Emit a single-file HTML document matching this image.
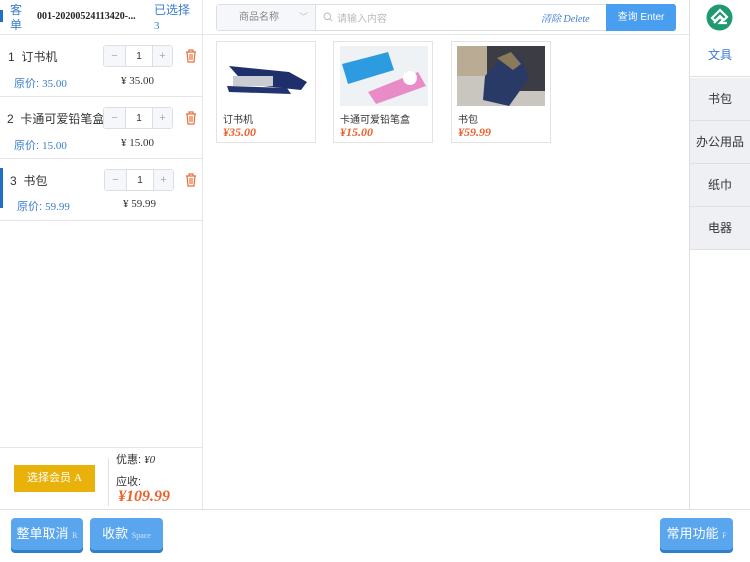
<!DOCTYPE html>
<html><head><meta charset="utf-8"><style>
*{box-sizing:border-box;margin:0;padding:0}
body{width:750px;height:562px;overflow:hidden;background:#fff;font-family:"Liberation Sans","Noto Sans CJK SC",sans-serif;position:relative;color:#333}
.a{position:absolute}
.serif{font-family:"Liberation Serif","Noto Serif CJK SC",serif}
.row{position:absolute;left:0;width:202px;border-bottom:1px solid #e6e6e6}
.stp{position:absolute;width:70px;height:22px;border:1px solid #dcdfe6;border-radius:3px;background:#fff;font-size:11px}
.stp span{position:absolute;top:0;height:20px;display:flex;align-items:center;justify-content:center;color:#aaa}
.cat{position:absolute;left:690px;width:60px;height:43px;background:#eef0f3;border-bottom:1px solid #e0e0e0;text-align:center;line-height:43px;font-size:12px;color:#333}
.card{position:absolute;top:41px;width:100px;height:102px;border:1px solid #e3e3e3;background:#fff}
.card .n{position:absolute;left:6px;top:69px;font-size:10px}
.card .p{position:absolute;left:6px;top:83px;font-size:12px;color:#f0602a;font-style:italic;font-weight:bold;font-family:"Liberation Serif",serif}
.btn{position:absolute;top:518px;height:32px;background:#5aa6ee;border-radius:4px;box-shadow:0 3px 0 #2f7fcc;color:#fff;font-size:13px;text-align:center;line-height:32px}
.btn small{font-size:8px;color:#d6e8fb;font-family:"Liberation Serif",serif}
.trash{position:absolute;width:12px;height:14px}
</style></head><body>
<div class="a" style="left:202px;top:0;width:1px;height:509px;background:#e6e6e6"></div>
<div class="row" style="top:0;height:35px"></div>
<div class="a" style="left:0;top:10px;width:3px;height:12px;background:#1f6fc5"></div>
<div class="a" style="left:10px;top:3px;font-size:12px;color:#3a7ccf;line-height:15px">客<br>单</div>
<div class="a serif" style="left:37px;top:11px;font-size:10px;font-weight:bold;color:#222">001-20200524113420-...</div>
<div class="a" style="left:154px;top:3px;font-size:12px;color:#3a7ccf;line-height:15px">已选择<br><span class="serif" style="font-size:11px">3</span></div>

<div class="row" style="top:35px;height:62px"></div>
<div class="row" style="top:97px;height:62px"></div>
<div class="row" style="top:159px;height:62px"></div>
<div class="a" style="left:0;top:168px;width:3px;height:40px;background:#1f6fc5"></div>

<div class="a" style="left:8px;top:48px;font-size:12px">1&nbsp; 订书机</div>
<div class="a" style="left:14px;top:75px;font-size:11px;color:#3a7ccf">原价: <span class="serif">35.00</span></div>
<div class="a serif" style="left:121px;top:75px;font-size:11px">¥ 35.00</div>
<div class="stp" style="left:103px;top:45px"><span style="left:0;width:22px;border-right:1px solid #dcdfe6;background:#f5f7fa">−</span><span style="left:22px;width:26px;color:#333;font-size:10px">1</span><span style="left:48px;width:20px;border-left:1px solid #dcdfe6;background:#f5f7fa">+</span></div>

<div class="a" style="left:7px;top:110px;font-size:12px">2&nbsp; 卡通可爱铅笔盒</div>
<div class="a" style="left:14px;top:137px;font-size:11px;color:#3a7ccf">原价: <span class="serif">15.00</span></div>
<div class="a serif" style="left:121px;top:137px;font-size:11px">¥ 15.00</div>
<div class="stp" style="left:103px;top:107px"><span style="left:0;width:22px;border-right:1px solid #dcdfe6;background:#f5f7fa">−</span><span style="left:22px;width:26px;color:#333;font-size:10px">1</span><span style="left:48px;width:20px;border-left:1px solid #dcdfe6;background:#f5f7fa">+</span></div>

<div class="a" style="left:10px;top:172px;font-size:12px">3&nbsp; 书包</div>
<div class="a" style="left:17px;top:198px;font-size:11px;color:#3a7ccf">原价: <span class="serif">59.99</span></div>
<div class="a serif" style="left:123px;top:198px;font-size:11px">¥ 59.99</div>
<div class="stp" style="left:104px;top:169px"><span style="left:0;width:22px;border-right:1px solid #dcdfe6;background:#f5f7fa">−</span><span style="left:22px;width:26px;color:#333;font-size:10px">1</span><span style="left:48px;width:20px;border-left:1px solid #dcdfe6;background:#f5f7fa">+</span></div>

<svg class="trash" style="left:185px;top:49px" viewBox="0 0 12 14"><path d="M1 3h10M4 3V1h4v2M2 3l1 10h6l1-10M5 5v6M7 5v6" fill="none" stroke="#e8703a" stroke-width="1.2"/></svg>
<svg class="trash" style="left:185px;top:111px" viewBox="0 0 12 14"><path d="M1 3h10M4 3V1h4v2M2 3l1 10h6l1-10M5 5v6M7 5v6" fill="none" stroke="#e8703a" stroke-width="1.2"/></svg>
<svg class="trash" style="left:185px;top:173px" viewBox="0 0 12 14"><path d="M1 3h10M4 3V1h4v2M2 3l1 10h6l1-10M5 5v6M7 5v6" fill="none" stroke="#e8703a" stroke-width="1.2"/></svg>

<div class="a" style="left:0;top:447px;width:202px;height:1px;background:#e6e6e6"></div>
<div class="a" style="left:14px;top:465px;width:81px;height:27px;background:#e8b20a;color:#fff;font-size:11px;text-align:center;line-height:27px">选择会员 <span class="serif">A</span></div>
<div class="a" style="left:108px;top:458px;width:1px;height:48px;background:#e0e0e0"></div>
<div class="a" style="left:116px;top:451px;font-size:11px">优惠: <span class="serif" style="font-style:italic">¥0</span></div>
<div class="a" style="left:116px;top:473px;font-size:11px">应收:</div>
<div class="a serif" style="left:118px;top:488px;font-size:16px;color:#f0602a;font-style:italic;font-weight:bold">¥109.99</div>

<div class="a" style="left:216px;top:4px;width:460px;height:27px;border:1px solid #dcdfe6;border-radius:3px;background:#fff"></div>
<div class="a" style="left:217px;top:5px;width:99px;height:25px;background:#f5f7fa;border-right:1px solid #dcdfe6;font-size:10px;color:#888;line-height:25px;padding-left:22px">商品名称<span style="position:absolute;left:82px;color:#bbb;font-size:9px">﹀</span></div>
<svg class="a" style="left:323px;top:12px" width="10" height="10" viewBox="0 0 10 10"><circle cx="4.3" cy="4.3" r="3.3" fill="none" stroke="#bbb"/><path d="M6.8 6.8L9 9" stroke="#bbb"/></svg>
<div class="a" style="left:337px;top:10px;font-size:10px;color:#bbb">请输入内容</div>
<div class="a serif" style="left:541px;top:10px;font-size:10px;color:#3a7ccf;font-style:italic">清除 Delete</div>
<div class="a" style="left:606px;top:4px;width:70px;height:27px;background:#4a9ef0;border-radius:0 3px 3px 0;color:#fff;font-size:10px;text-align:center;line-height:27px">查询 Enter</div>
<div class="a" style="left:203px;top:34px;width:487px;height:1px;background:#e6e6e6"></div>

<div class="card" style="left:216px"><svg class="a" style="left:6px;top:4px" width="88" height="60" viewBox="0 0 88 60"><rect width="88" height="60" fill="#fff"/><path d="M6 20l60 6 18 10-6 8-56-6z" fill="#1f2f6b"/><rect x="10" y="30" width="40" height="10" fill="#c9ccd2"/><path d="M4 40l60 2 4 6-62-2z" fill="#22336e"/></svg><div class="n">订书机</div><div class="p">¥35.00</div></div>
<div class="card" style="left:333px"><svg class="a" style="left:6px;top:4px" width="88" height="60" viewBox="0 0 88 60"><rect width="88" height="60" fill="#eef2f5"/><path d="M2 18l46-12 6 18-46 14z" fill="#2c9be0"/><path d="M28 46l50-20 8 14-50 18z" fill="#e98bc7"/><circle cx="70" cy="32" r="7" fill="#fff"/></svg><div class="n">卡通可爱铅笔盒</div><div class="p">¥15.00</div></div>
<div class="card" style="left:451px"><svg class="a" style="left:5px;top:4px" width="88" height="60" viewBox="0 0 88 60"><rect width="88" height="60" fill="#c9c6c0"/><rect x="0" y="0" width="30" height="30" fill="#b9ab94"/><rect x="30" y="0" width="58" height="45" fill="#3c3d44"/><path d="M28 30l20-22 16 4 8 20-20 28-26-6z" fill="#2a3a66"/><path d="M40 12l14-6 10 12-8 6z" fill="#8a7a5a"/></svg><div class="n">书包</div><div class="p">¥59.99</div></div>

<div class="a" style="left:689px;top:0;width:1px;height:509px;background:#e0e0e0"></div>
<div class="a" style="left:690px;top:34px;width:60px;height:1px;background:#e0e0e0"></div>
<svg class="a" style="left:706px;top:4px" width="27" height="27" viewBox="0 0 27 27"><circle cx="13.5" cy="13.5" r="13" fill="#1e9a6e"/><path d="M6 14l8-8 7 7-3 3-4-4-5 5zM8 19l6-6 3 3-3 3h7" fill="none" stroke="#fff" stroke-width="2.2"/></svg>
<div class="cat" style="top:34px;background:#fff;color:#3a7ccf">文具</div>
<div class="cat" style="top:78px">书包</div>
<div class="cat" style="top:121px">办公用品</div>
<div class="cat" style="top:164px">纸巾</div>
<div class="cat" style="top:207px">电器</div>

<div class="a" style="left:0;top:509px;width:750px;height:1px;background:#e0e0e0"></div>
<div class="btn" style="left:11px;width:72px">整单取消 <small>R</small></div>
<div class="btn" style="left:90px;width:73px">收款 <small>Space</small></div>
<div class="btn" style="left:660px;width:73px">常用功能 <small>F</small></div>
</body></html>
